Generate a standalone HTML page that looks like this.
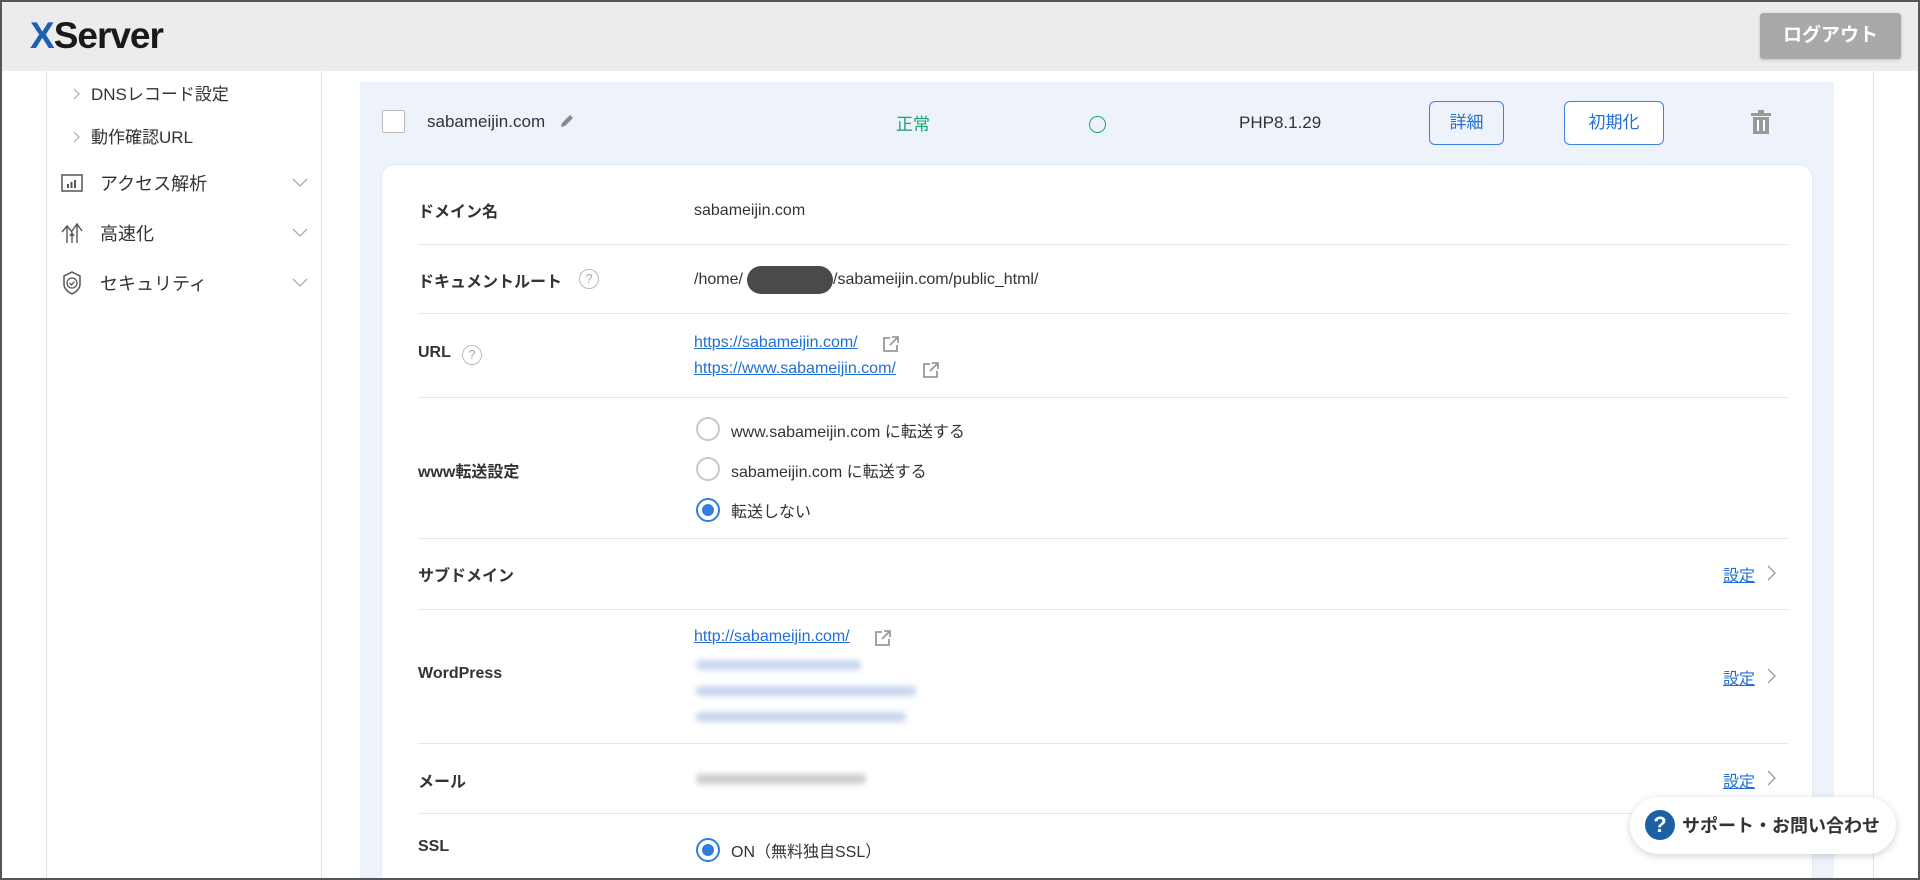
<!DOCTYPE html>
<html><head><meta charset="utf-8">
<style>
*{box-sizing:border-box;margin:0;padding:0}
html,body{width:1920px;height:880px;overflow:hidden}
body{background:#fff;font-family:"Liberation Sans","Noto Sans CJK JP",sans-serif;color:#333;position:relative}
.frame{position:absolute;left:0;top:0;width:1920px;height:880px;border:2px solid #555;z-index:50;pointer-events:none}
.hdr{position:absolute;left:0;top:0;width:1920px;height:71px;background:#ececec}
.logo{position:absolute;left:30px;top:17px;font-size:37px;font-weight:bold;letter-spacing:-1px;color:#1a1a1a;line-height:1}
.logo span{color:#1e5fb4}
.logout{position:absolute;left:1760px;top:13px;width:141px;height:46px;background:#a9a9a9;color:#fff;font-weight:bold;font-size:19px;text-align:center;line-height:46px;border-radius:3px;box-shadow:0 1px 3px rgba(0,0,0,.2)}
.a{position:absolute;white-space:nowrap}
.vl{position:absolute;width:1px;background:#e2e2e2}
.side{font-size:17px;color:#333}
.panel{position:absolute;left:360px;top:82px;width:1474px;height:800px;background:#eef3fb}
.card{position:absolute;left:381px;top:164px;width:1432px;height:716px;background:#fff;border-radius:14px 14px 0 0;border:1px solid #e4e9f0;border-bottom:none}
.hl{position:absolute;left:418px;width:1371px;height:1px;background:#e8e8e8}
.lbl{font-weight:bold;font-size:16px;color:#333}
.val{font-size:16px;color:#333}
.lnk{color:#1f6fd6;text-decoration:underline;font-size:16px}
.btn{position:absolute;border:1px solid #3b82dc;border-radius:6px;color:#1f6fd6;font-size:17px;text-align:center}
.radio{position:absolute;width:24px;height:24px;border:2px solid #c8c8c8;border-radius:50%;background:#fff}
.radio.on{border-color:#2f7ee0}
.radio.on::after{content:"";position:absolute;left:4px;top:4px;width:12px;height:12px;border-radius:50%;background:#2f7ee0}
.blur{position:absolute;height:10px;background:#c8d6f0;filter:blur(3px);border-radius:4px}
.ext{position:absolute}
</style></head><body>
<div class="hdr"><div class="logo"><span>X</span>Server</div><div class="logout">ログアウト</div></div>

<div class="vl" style="left:46px;top:71px;height:809px"></div>
<div class="vl" style="left:321px;top:71px;height:809px"></div>
<div class="vl" style="left:1873px;top:71px;height:809px"></div>

<svg class="a" style="left:73px;top:88px" width="8" height="12"><path d="M1 1l5 5-5 5" fill="none" stroke="#aaa" stroke-width="1.2"/></svg>
<div class="a side" style="left:91px;top:80px">DNSレコード設定</div>
<svg class="a" style="left:73px;top:131px" width="8" height="12"><path d="M1 1l5 5-5 5" fill="none" stroke="#aaa" stroke-width="1.2"/></svg>
<div class="a side" style="left:91px;top:123px">動作確認URL</div>

<svg class="a" style="left:61px;top:174px" width="22" height="18" viewBox="0 0 22 18"><rect x="1" y="1" width="20" height="16" fill="none" stroke="#555" stroke-width="1.5"/><rect x="6" y="10" width="2" height="4" fill="#555"/><rect x="9.5" y="8" width="2" height="6" fill="#555"/><rect x="13" y="6" width="2" height="8" fill="#555"/></svg>
<div class="a side" style="left:100px;top:170px;font-size:18px">アクセス解析</div>
<svg class="a" style="left:292px;top:178px" width="16" height="10"><path d="M1 1l7 7 7-7" fill="none" stroke="#aaa" stroke-width="1.3"/></svg>

<svg class="a" style="left:61px;top:222px" width="22" height="22" viewBox="0 0 22 22"><path d="M1 10l5-6 5 6M6 4v17M11 9l5-7 5 7M16 2v19M9 14l2-3 2 3M11 11v10" fill="none" stroke="#555" stroke-width="1.4"/></svg>
<div class="a side" style="left:100px;top:220px;font-size:18px">高速化</div>
<svg class="a" style="left:292px;top:228px" width="16" height="10"><path d="M1 1l7 7 7-7" fill="none" stroke="#aaa" stroke-width="1.3"/></svg>

<svg class="a" style="left:62px;top:271px" width="20" height="24" viewBox="0 0 20 24"><path d="M10 1l8 4v8c0 5-4 8-8 10-4-2-8-5-8-10V5z" fill="none" stroke="#555" stroke-width="1.5"/><circle cx="10" cy="12" r="5" fill="none" stroke="#555" stroke-width="1.3"/><path d="M7.5 12l2 2 3-3.5" fill="none" stroke="#555" stroke-width="1.3"/></svg>
<div class="a side" style="left:100px;top:270px;font-size:18px">セキュリティ</div>
<svg class="a" style="left:292px;top:278px" width="16" height="10"><path d="M1 1l7 7 7-7" fill="none" stroke="#aaa" stroke-width="1.3"/></svg>

<div class="panel"></div>
<div class="a" style="left:382px;top:110px;width:23px;height:23px;border:1.5px solid #bbb;background:#fff;border-radius:2px"></div>
<div class="a val" style="left:427px;top:112px;font-size:17px">sabameijin.com</div>
<svg class="a" style="left:559px;top:113px" width="16" height="16" viewBox="0 0 16 16"><path d="M2 14l1-4 8-8 3 3-8 8z" fill="#888"/></svg>
<div class="a" style="left:896px;top:110px;color:#1aa36c;font-size:17px">正常</div>
<div class="a" style="left:1089px;top:116px;width:17px;height:17px;border:1.5px solid #1aa36c;border-radius:50%"></div>
<div class="a val" style="left:1239px;top:113px;font-size:17px">PHP8.1.29</div>
<div class="btn" style="left:1429px;top:101px;width:75px;height:44px;line-height:42px;background:#eef3fb">詳細</div>
<div class="btn" style="left:1564px;top:101px;width:100px;height:44px;line-height:42px;background:#fff">初期化</div>
<svg class="a" style="left:1750px;top:110px" width="22" height="25" viewBox="0 0 22 25"><rect x="1" y="3" width="20" height="3" fill="#999"/><rect x="8" y="0" width="6" height="3" fill="#999"/><path d="M3 7h16v17H3z" fill="#999"/><rect x="7" y="10" width="2" height="11" fill="#fff"/><rect x="13" y="10" width="2" height="11" fill="#fff"/></svg>

<div class="card"></div>
<div class="a lbl" style="left:418px;top:198px">ドメイン名</div>
<div class="a val" style="left:694px;top:202px">sabameijin.com</div>
<div class="hl" style="top:244px"></div>

<div class="a lbl" style="left:418px;top:268px">ドキュメントルート</div>
<div class="a" style="left:579px;top:269px;width:20px;height:20px;border:1.5px solid #bbb;border-radius:50%;color:#aaa;font-size:13px;text-align:center;line-height:17px">?</div>
<div class="a val" style="left:694px;top:271px">/home/</div>
<div class="a" style="left:747px;top:266px;width:86px;height:28px;background:#4a4a4a;border-radius:14px"></div>
<div class="a val" style="left:833px;top:271px">/sabameijin.com/public_html/</div>
<div class="hl" style="top:313px"></div>

<div class="a lbl" style="left:418px;top:344px">URL</div>
<div class="a" style="left:462px;top:345px;width:20px;height:20px;border:1.5px solid #bbb;border-radius:50%;color:#aaa;font-size:13px;text-align:center;line-height:17px">?</div>
<div class="a lnk" style="left:694px;top:334px">https://sabameijin.com/</div>
<div class="a lnk" style="left:694px;top:360px">https://www.sabameijin.com/</div>
<svg class="ext" style="left:883px;top:336px" width="16" height="16" viewBox="0 0 16 16"><path d="M7 2H1v13h13V9" fill="none" stroke="#999" stroke-width="1.8"/><path d="M9 1h6v6M15 1L7 9" fill="none" stroke="#999" stroke-width="1.8"/></svg>
<svg class="ext" style="left:923px;top:362px" width="16" height="16" viewBox="0 0 16 16"><path d="M7 2H1v13h13V9" fill="none" stroke="#999" stroke-width="1.8"/><path d="M9 1h6v6M15 1L7 9" fill="none" stroke="#999" stroke-width="1.8"/></svg>
<div class="hl" style="top:397px"></div>

<div class="a lbl" style="left:418px;top:458px">www転送設定</div>
<div class="radio" style="left:696px;top:417px"></div>
<div class="a val" style="left:731px;top:418px">www.sabameijin.com に転送する</div>
<div class="radio" style="left:696px;top:457px"></div>
<div class="a val" style="left:731px;top:458px">sabameijin.com に転送する</div>
<div class="radio on" style="left:696px;top:498px"></div>
<div class="a val" style="left:731px;top:498px">転送しない</div>
<div class="hl" style="top:538px"></div>

<div class="a lbl" style="left:418px;top:562px">サブドメイン</div>
<div class="a lnk" style="left:1723px;top:562px">設定</div>
<svg class="a" style="left:1767px;top:565px" width="10" height="16"><path d="M1 1l7 7-7 7" fill="none" stroke="#999" stroke-width="1.3"/></svg>
<div class="hl" style="top:609px"></div>

<div class="a lbl" style="left:418px;top:665px">WordPress</div>
<div class="a lnk" style="left:694px;top:628px">http://sabameijin.com/</div>
<svg class="ext" style="left:875px;top:630px" width="16" height="16" viewBox="0 0 16 16"><path d="M7 2H1v13h13V9" fill="none" stroke="#999" stroke-width="1.8"/><path d="M9 1h6v6M15 1L7 9" fill="none" stroke="#999" stroke-width="1.8"/></svg>
<div class="blur" style="left:696px;top:660px;width:165px"></div>
<div class="blur" style="left:696px;top:686px;width:220px"></div>
<div class="blur" style="left:696px;top:712px;width:210px"></div>
<div class="a lnk" style="left:1723px;top:665px">設定</div>
<svg class="a" style="left:1767px;top:668px" width="10" height="16"><path d="M1 1l7 7-7 7" fill="none" stroke="#999" stroke-width="1.3"/></svg>
<div class="hl" style="top:743px"></div>

<div class="a lbl" style="left:418px;top:768px">メール</div>
<div class="blur" style="left:696px;top:774px;width:170px;background:#ccc"></div>
<div class="a lnk" style="left:1723px;top:768px">設定</div>
<svg class="a" style="left:1767px;top:770px" width="10" height="16"><path d="M1 1l7 7-7 7" fill="none" stroke="#999" stroke-width="1.3"/></svg>
<div class="hl" style="top:813px"></div>

<div class="a lbl" style="left:418px;top:838px">SSL</div>
<div class="radio on" style="left:696px;top:838px"></div>
<div class="a val" style="left:731px;top:838px">ON（無料独自SSL）</div>

<div class="a" style="left:1630px;top:797px;width:266px;height:57px;background:#fff;border-radius:29px;box-shadow:0 2px 8px rgba(0,0,0,.18)"></div>
<div class="a" style="left:1645px;top:810px;width:30px;height:30px;border-radius:50%;background:#1d5fa6;color:#fff;font-weight:bold;font-size:22px;text-align:center;line-height:30px">?</div>
<div class="a" style="left:1682px;top:812px;font-weight:bold;font-size:18px;color:#333">サポート・お問い合わせ</div>

<div class="frame"></div>
</body></html>
